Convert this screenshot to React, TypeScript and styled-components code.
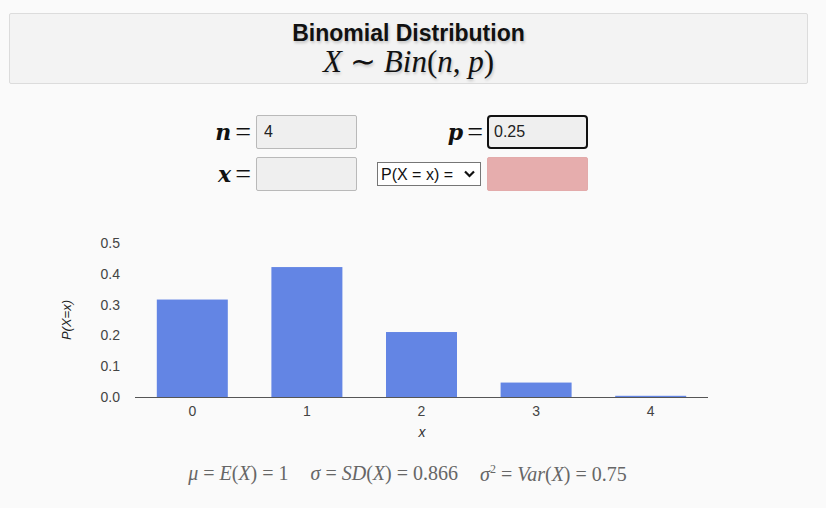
import React from "react";
import styled, { createGlobalStyle } from "styled-components";

const Global = createGlobalStyle`
  html, body { margin: 0; padding: 0; background: #fafafa; }
  body { font-family: "Liberation Sans", Arial, sans-serif; width: 826px; height: 508px; overflow: hidden; }
`;

const Page = styled.div`
  display: flex;
  flex-direction: column;
  padding-top: 13px;
`;

const Header = styled.header`
  margin: 0 18px 0 9px;
  height: 71px;
  box-sizing: border-box;
  background: #f3f3f3;
  border: 1px solid #dcdcdc;
  border-radius: 2px;
  display: flex;
  flex-direction: column;
  align-items: center;
  padding-top: 6px;
`;

const Title = styled.h1`
  margin: 0;
  font-family: "Liberation Sans", Arial, sans-serif;
  font-size: 23px;
  line-height: 26px;
  font-weight: bold;
  color: #111;
  text-shadow: 1px 2px 3px rgba(0, 0, 0, 0.2);
`;

const MathLine = styled.div`
  font-family: "Liberation Serif", "Times New Roman", serif;
  font-size: 31px;
  line-height: 32px;
  color: #111;
  text-shadow: 1px 2px 3px rgba(0, 0, 0, 0.2);
`;

const I = styled.i`
  font-style: italic;
`;

const Op = styled.span<{ $m?: number }>`
  margin: 0 ${(p) => p.$m ?? 5}px;
`;

const Form = styled.div`
  display: grid;
  grid-template-columns: 65px 101px 130px 101px;
  grid-auto-rows: 34px;
  row-gap: 8px;
  margin: 31px 0 0 191px;
`;

const Label = styled.label<{ $pad?: number }>`
  display: flex;
  align-items: center;
  justify-content: flex-end;
  padding-right: ${(p) => p.$pad ?? 5}px;
  font-family: "DejaVu Serif", "Liberation Serif", serif;
  font-size: 22px;
  font-weight: bold;
  color: #111;
  gap: 4px;
`;

const Eq = styled.span`
  font-family: "Liberation Serif", serif;
  font-weight: normal;
  font-style: normal;
  font-size: 28px;
`;

const TextBox = styled.input<{ $focus?: boolean; $pink?: boolean }>`
  box-sizing: border-box;
  width: 101px;
  height: 34px;
  margin: 0;
  padding: 0 7px;
  font-family: "Liberation Sans", Arial, sans-serif;
  font-size: 16px;
  color: #222;
  outline: none;
  background: ${(p) => (p.$pink ? "#e6adad" : "#efefef")};
  border: ${(p) => (p.$focus ? "2px solid #111" : p.$pink ? "1px solid #e3abab" : "1px solid #b9b9b9")};
  border-radius: ${(p) => (p.$focus ? "4px" : "2px")};
  padding-left: ${(p) => (p.$focus ? "5px" : "7px")};
`;

const SelectCell = styled.div`
  display: flex;
  align-items: center;
  justify-content: flex-end;
  padding-right: 6px;
`;

const SelectWrap = styled.div`
  position: relative;
  display: flex;
`;

const Select = styled.select`
  box-sizing: border-box;
  width: 104px;
  height: 24px;
  font-family: "Liberation Sans", Arial, sans-serif;
  font-size: 16px;
  color: #111;
  background: #fff;
  border: 1px solid #767676;
  border-radius: 0;
  padding: 0 0 0 3px;
  appearance: none;
  -webkit-appearance: none;
  outline: none;
`;

const Chevron = styled.svg`
  position: absolute;
  right: 6px;
  top: 8px;
  pointer-events: none;
`;

const ChartWrap = styled.div`
  margin-top: 34px;
  height: 225px;
`;

const Stats = styled.div`
  display: flex;
  justify-content: center;
  gap: 22px;
  margin: 12px 0 0 -11px;
  font-family: "Liberation Serif", "Times New Roman", serif;
  font-size: 20px;
  color: #666;
`;

const Stat = styled.span`
  white-space: nowrap;
`;

const Sup = styled.sup`
  font-size: 12px;
`;

const probs = [0.31640625, 0.421875, 0.2109375, 0.046875, 0.00390625];

function Chart() {
  const base = 172;
  const scale = 308;
  const left = 135;
  const cat = 114.6;
  const barW = 71;
  const ticks = [0, 0.1, 0.2, 0.3, 0.4, 0.5];
  return (
    <svg width={826} height={225} viewBox="0 0 826 225">
      {ticks.map((t) => (
        <text
          key={t}
          x={120}
          y={base - t * scale + 5}
          textAnchor="end"
          fontFamily="Liberation Sans, Arial, sans-serif"
          fontSize={14}
          fill="#444"
        >
          {t.toFixed(1)}
        </text>
      ))}
      {probs.map((p, i) => {
        const cx = left + cat * (i + 0.5);
        const h = Math.max(1, p * scale);
        return (
          <g key={i}>
            <rect x={cx - barW / 2} y={base - h} width={barW} height={h} fill="#6385e4" />
            <text
              x={cx}
              y={base + 19}
              textAnchor="middle"
              fontFamily="Liberation Sans, Arial, sans-serif"
              fontSize={14}
              fill="#444"
            >
              {i}
            </text>
          </g>
        );
      })}
      <line x1={left} x2={708} y1={base + 0.5} y2={base + 0.5} stroke="#555" strokeWidth={1} />
      <text
        x={422}
        y={base + 40}
        textAnchor="middle"
        fontFamily="Liberation Sans, Arial, sans-serif"
        fontStyle="italic"
        fontSize={14}
        fill="#333"
      >
        x
      </text>
      <text
        transform="translate(71 95) rotate(-90)"
        textAnchor="middle"
        fontFamily="Liberation Sans, Arial, sans-serif"
        fontStyle="italic"
        fontSize={13}
        fill="#222"
      >
        P(X=x)
      </text>
    </svg>
  );
}

export default function App() {
  return (
    <>
      <Global />
      <Page>
        <Header>
          <Title>Binomial Distribution</Title>
          <MathLine>
            <I>X</I>
            <Op $m={8}>∼</Op>
            <I>Bin</I>(<I>n</I>, <I>p</I>)
          </MathLine>
        </Header>
        <Form>
          <Label>
            <I>n</I>
            <Eq>=</Eq>
          </Label>
          <TextBox defaultValue="4" />
          <Label $pad={4}>
            <I>p</I>
            <Eq>=</Eq>
          </Label>
          <TextBox defaultValue="0.25" $focus />
          <Label>
            <I>x</I>
            <Eq>=</Eq>
          </Label>
          <TextBox defaultValue="" />
          <SelectCell>
            <SelectWrap>
              <Select defaultValue="eq">
                <option value="eq">P(X = x) =</option>
                <option value="le">P(X ≤ x) =</option>
                <option value="ge">P(X ≥ x) =</option>
              </Select>
              <Chevron width="11" height="8" viewBox="0 0 11 8">
                <path d="M1 1.5 L5.5 6 L10 1.5" fill="none" stroke="#111" strokeWidth="2.2" />
              </Chevron>
            </SelectWrap>
          </SelectCell>
          <TextBox defaultValue="" $pink readOnly />
        </Form>
        <ChartWrap>
          <Chart />
        </ChartWrap>
        <Stats>
          <Stat>
            <I>μ</I>
            <Op>=</Op>
            <I>E</I>(<I>X</I>)<Op>=</Op>1
          </Stat>
          <Stat>
            <I>σ</I>
            <Op>=</Op>
            <I>SD</I>(<I>X</I>)<Op>=</Op>0.866
          </Stat>
          <Stat>
            <I>σ</I>
            <Sup>2</Sup>
            <Op>=</Op>
            <I>Var</I>(<I>X</I>)<Op>=</Op>0.75
          </Stat>
        </Stats>
      </Page>
    </>
  );
}
